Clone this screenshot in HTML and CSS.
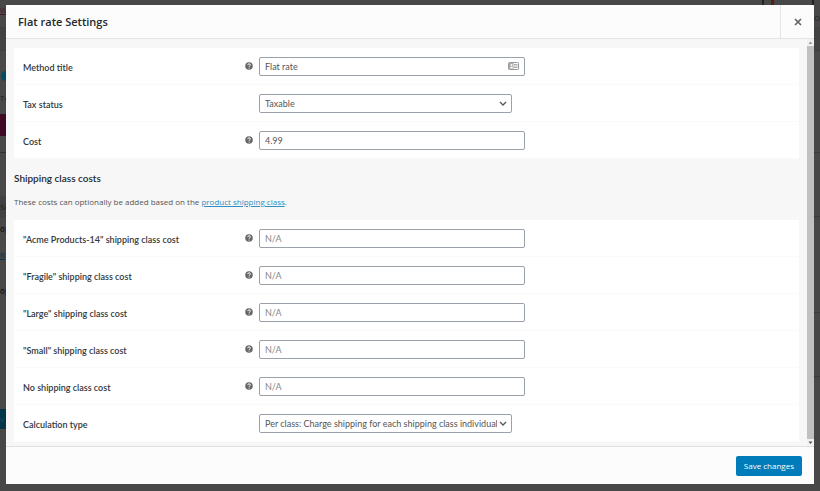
FILE: index.html
```html
<!DOCTYPE html>
<html lang="en">
<head>
  <meta charset="UTF-8">
  <meta name="viewport" content="width=device-width, initial-scale=1.0">
  <title>Flat rate Settings</title>
  <link rel="stylesheet" href="styles.css">
</head>
<body>
  <svg class="sprite" aria-hidden="true">
    <symbol id="icon-help" viewBox="0 0 16 16">
      <circle cx="8" cy="8" r="7.5" fill="#666"/>
      <path d="M5.4 6.2C5.5 4.5 6.6 3.6 8.1 3.6c1.6 0 2.7.9 2.7 2.3C10.8 7.7 8.2 7.8 8.2 9.6" fill="none" stroke="#fff" stroke-width="1.9"/>
      <circle cx="8.2" cy="12" r="1.2" fill="#fff"/>
    </symbol>
  </svg>

  <!-- Page behind the modal -->
  <div class="page" aria-hidden="true">
    <div class="page-left">
      <div class="bit bit-link">W</div>
      <div class="bit bit-bar"></div>
      <div class="bit bit-dot"></div>
      <div class="bit bit-text">To</div>
      <div class="bit bit-red"></div>
      <div class="bit bit-rule"></div>
      <div class="bit bit-head">Se</div>
      <div class="bit bit-strong">op</div>
      <div class="bit bit-blue">R</div>
      <div class="bit bit-strong bit-last">op</div>
      <div class="bit bit-button">v</div>
    </div>
    <div class="page-top">
      <span class="tab tab-flag"></span>
      <span class="tab"></span>
    </div>
    <div class="page-right">
      <div class="side-text">Ore</div>
      <div class="side-panel"></div>
      <div class="side-row side-row-tall"></div>
      <div class="side-row"></div>
      <div class="side-row side-row-mid"></div>
      <div class="side-row"></div>
    </div>
  </div>

  <div class="modal" role="dialog" aria-labelledby="modal-title">
    <header class="modal-header">
      <h1 id="modal-title">Flat rate Settings</h1>
      <button class="modal-close" type="button" aria-label="Close">
        <svg viewBox="0 0 8 8" width="8" height="8"><path d="M1 1l6 6M7 1L1 7" stroke="#666" stroke-width="1.7" fill="none"/></svg>
      </button>
    </header>

    <div class="modal-body">
      <form class="settings" id="settings-form">
        <div class="form-table">
          <div class="row">
            <label for="title">Method title</label>
            <svg class="help"><use href="#icon-help"/></svg>
            <div class="field">
              <input id="title" type="text" value="Flat rate">
              <svg class="card-icon" viewBox="0 0 22 16">
                <rect x="1" y="1" width="20" height="14" rx="1.5" fill="#fff" stroke="#999" stroke-width="2"/>
                <rect x="2" y="2" width="9" height="12" fill="#aaa"/>
                <circle cx="7" cy="6" r="2" fill="#fff"/>
                <path d="M4 13c0-5 6-5 6 0z" fill="#fff"/>
                <path d="M12 5h7M12 8h7M12 11h7" stroke="#999" stroke-width="1.6"/>
              </svg>
            </div>
          </div>
          <div class="row">
            <label for="tax-status">Tax status</label>
            <div class="field field-select">
              <select id="tax-status">
                <option>Taxable</option>
                <option>None</option>
              </select>
              <svg class="chevron" viewBox="0 0 8 6"><path d="M1 1l3 3 3-3" fill="none" stroke="#555" stroke-width="1.3"/></svg>
            </div>
          </div>
          <div class="row">
            <label for="cost">Cost</label>
            <svg class="help"><use href="#icon-help"/></svg>
            <div class="field"><input id="cost" type="text" value="4.99"></div>
          </div>
        </div>

        <h2>Shipping class costs</h2>
        <p>These costs can optionally be added based on the <a href="#">product shipping class</a>.</p>

        <div class="form-table">
          <div class="row">
            <label for="class-acme">"Acme Products-14" shipping class cost</label>
            <svg class="help"><use href="#icon-help"/></svg>
            <div class="field"><input id="class-acme" type="text" placeholder="N/A"></div>
          </div>
          <div class="row">
            <label for="class-fragile">"Fragile" shipping class cost</label>
            <svg class="help"><use href="#icon-help"/></svg>
            <div class="field"><input id="class-fragile" type="text" placeholder="N/A"></div>
          </div>
          <div class="row">
            <label for="class-large">"Large" shipping class cost</label>
            <svg class="help"><use href="#icon-help"/></svg>
            <div class="field"><input id="class-large" type="text" placeholder="N/A"></div>
          </div>
          <div class="row">
            <label for="class-small">"Small" shipping class cost</label>
            <svg class="help"><use href="#icon-help"/></svg>
            <div class="field"><input id="class-small" type="text" placeholder="N/A"></div>
          </div>
          <div class="row">
            <label for="class-none">No shipping class cost</label>
            <svg class="help"><use href="#icon-help"/></svg>
            <div class="field"><input id="class-none" type="text" placeholder="N/A"></div>
          </div>
          <div class="row">
            <label for="calc-type">Calculation type</label>
            <div class="field field-select">
              <select id="calc-type">
                <option>Per class: Charge shipping for each shipping class individually</option>
                <option>Per order: Charge shipping for the most expensive shipping class</option>
              </select>
              <svg class="chevron" viewBox="0 0 8 6"><path d="M1 1l3 3 3-3" fill="none" stroke="#555" stroke-width="1.3"/></svg>
            </div>
          </div>
        </div>
      </form>
      <div class="scrollbar" aria-hidden="true">
        <svg viewBox="0 0 7 7" width="7" height="7"><path d="M1.5 5l2-2.5 2 2.5z" fill="#999"/></svg>
        <div class="thumb"></div>
        <svg viewBox="0 0 7 7" width="7" height="7"><path d="M1.5 2.5l2 2.5 2-2.5z" fill="#555"/></svg>
      </div>
    </div>

    <footer class="modal-footer">
      <button class="save" type="submit" form="settings-form">Save changes</button>
    </footer>
  </div>
</body>
</html>
```
FILE: styles.css
```css
* {
  box-sizing: border-box;
}
body {
  margin: 0;
  background: #484848;
  font-family: "Open Sans", "Noto Sans", sans-serif;
  font-size: 8px;
  color: #555;
}
.sprite {
  position: absolute;
  width: 0;
  height: 0;
}

/* dimmed page */
.page {
  display: flex;
  justify-content: space-between;
  height: 100vh;
  overflow: hidden;
}
.page-left,
.page-right {
  width: 6px;
  overflow: hidden;
}
.page-top {
  flex: 1;
  display: flex;
  justify-content: flex-end;
  gap: 38px;
}
.tab {
  width: 2px;
  height: 5px;
  background: #222;
}
.tab-flag {
  width: 12px;
  background: #484848;
  border-left: 2px solid #222;
  border-right: 3px solid #5a1d12;
}
.bit {
  height: 12px;
  line-height: 12px;
  color: #222;
}
.bit-link {
  margin-top: 4px;
  color: #4a1530;
  text-decoration: underline;
}
.bit-bar {
  height: 24px;
  margin-top: 11px;
  background: #434343;
  border-top: 1px solid #404040;
  border-bottom: 1px solid #404040;
}
.bit-dot {
  width: 10px;
  height: 10px;
  margin: 20px 0 0 1px;
  border-radius: 50%;
  background: #044b63;
}
.bit-text {
  margin-top: 11px;
}
.bit-red {
  height: 22px;
  margin-top: 10px;
  background: #3f0a23;
}
.bit-rule {
  height: 1px;
  margin-top: 16px;
  background: #333;
}
.bit-head {
  height: 22px;
  margin-top: 43px;
  line-height: 22px;
  background: #414141;
}
.bit-strong {
  margin-top: 5px;
  color: #111;
  font-weight: 600;
}
.bit-blue {
  margin-top: 14px;
  color: #06334a;
  text-decoration: underline;
}
.bit-last {
  margin-top: 24px;
}
.bit-button {
  height: 20px;
  margin-top: 112px;
  line-height: 20px;
  background: #033548;
  color: #284b5a;
}
.side-text {
  height: 27px;
  padding-top: 12px;
  line-height: 12px;
  color: #222;
}
.side-panel {
  height: 24px;
  background: #434343;
  border-bottom: 1px solid #3c3c3c;
}
.side-row {
  height: 64px;
  border-bottom: 1px solid #3c3c3c;
}
.side-row-tall {
  height: 102px;
}
.side-row-mid {
  height: 96px;
}

/* modal */
.modal {
  position: fixed;
  inset: 5px 6px 7px;
  display: flex;
  flex-direction: column;
  background: #f7f7f7;
}
.modal-header {
  display: flex;
  flex: none;
  height: 34px;
  background: #fcfcfc;
  border-bottom: 1px solid #e4e4e4;
}
h1 {
  flex: 1;
  margin: 0;
  padding-left: 12px;
  font-size: 11px;
  font-weight: 600;
  line-height: 34px;
  color: #23282d;
}
.modal-close {
  display: flex;
  align-items: center;
  justify-content: center;
  width: 34px;
  padding: 0;
  background: none;
  border: none;
  border-left: 1px solid #e4e4e4;
  cursor: pointer;
}
.modal-body {
  display: flex;
  flex: 1;
  min-height: 0;
}
.settings {
  flex: 1;
  padding: 9px 8px 0;
  overflow: hidden;
}
.form-table {
  background: #fff;
}
.row {
  display: flex;
  align-items: center;
  height: 37px;
  padding-left: 9px;
  border-bottom: 1px solid #fafafa;
}
.row label {
  width: 222px;
  padding-top: 3px;
  font-family: Lato, sans-serif;
  font-size: 9px;
  font-weight: 600;
  color: #32373c;
}
.help {
  width: 8px;
  height: 8px;
  margin-right: -8px;
}
.field {
  position: relative;
  width: 266px;
  margin-left: 14px;
}
.field-select {
  width: 253px;
}
input,
select {
  display: block;
  width: 100%;
  height: 19px;
  padding: 0 5px;
  font-family: Lato, sans-serif;
  font-size: 9px;
  color: #555;
  background: #fff;
  border: 1px solid #9aa1a9;
  border-radius: 2px;
  appearance: none;
}
select {
  padding-right: 14px;
}
input::placeholder {
  color: #888;
}
.card-icon {
  position: absolute;
  top: 5px;
  right: 6px;
  width: 11px;
  height: 8px;
}
.chevron {
  position: absolute;
  top: 7px;
  right: 5px;
  width: 8px;
  height: 6px;
  pointer-events: none;
}
h2 {
  margin: 13px 0 12px;
  font-family: Lato, sans-serif;
  font-size: 10px;
  font-weight: 600;
  line-height: 12px;
  color: #23282d;
}
p {
  margin: 0 0 12px;
  line-height: 12px;
}
a {
  color: #2f8fc0;
}
.scrollbar {
  display: flex;
  flex-direction: column;
  width: 7px;
  background: #f1f1f1;
}
.thumb {
  flex: 1;
  background: #c1c1c1;
}
.modal-footer {
  display: flex;
  flex: none;
  align-items: center;
  justify-content: flex-end;
  height: 38px;
  padding-right: 12px;
  background: #fcfcfc;
  border-top: 1px solid #e0e0e0;
}
.save {
  height: 20px;
  padding: 0 8px;
  font: inherit;
  color: #fff;
  background: #007cba;
  border: none;
  border-radius: 2px;
  cursor: pointer;
}
```
